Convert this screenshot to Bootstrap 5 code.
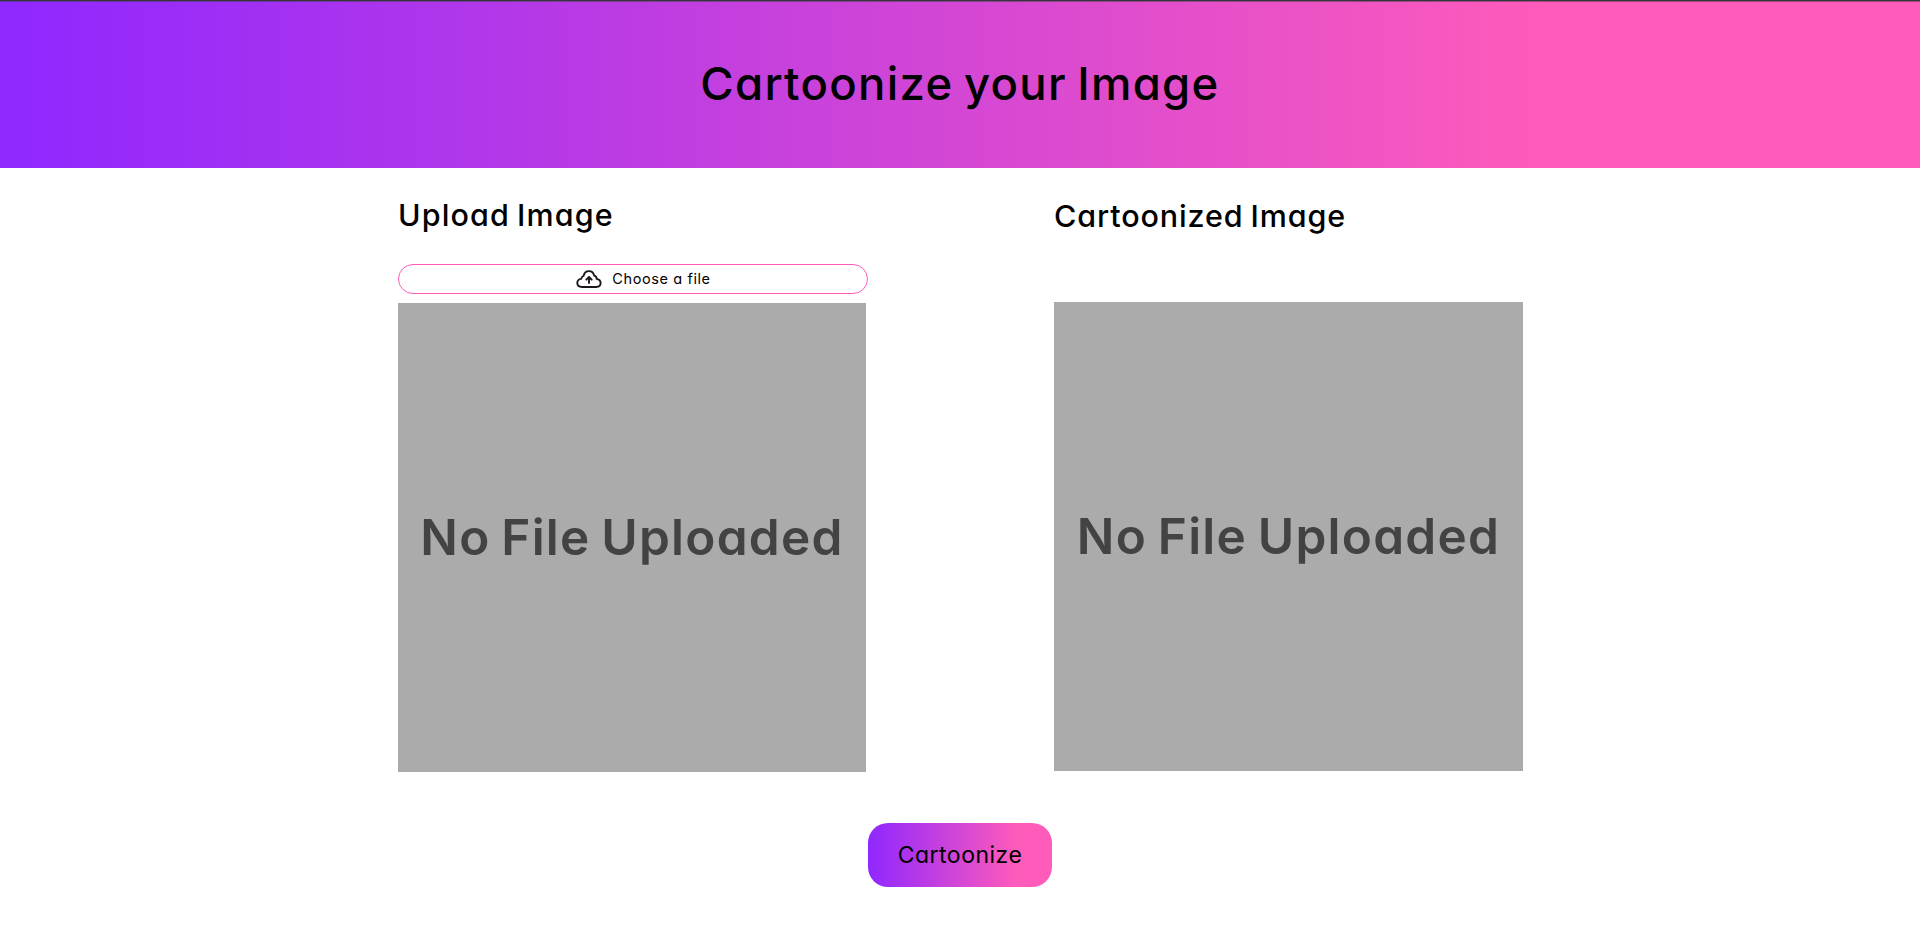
<!DOCTYPE html>
<html lang="en">
<head>
<meta charset="utf-8">
<meta name="viewport" content="width=device-width, initial-scale=1">
<title>Cartoonize your Image</title>
<link href="https://cdn.jsdelivr.net/npm/bootstrap@5.3.0/dist/css/bootstrap.min.css" rel="stylesheet">
<style>
body,button{font-family:Inter,"Open Sans",sans-serif;font-feature-settings:"cv11","ss03"}
body{color:#000;height:933px;overflow:hidden}
.brand-fill{background:linear-gradient(90deg,#8f27ff 0%,#ff5bba 81%)}
.hero{height:168px;border-top:1px solid #35353b;box-shadow:inset 0 1px rgba(60,60,66,.5);padding-top:56px}
.hero h1{font-size:45.5px;line-height:54px;font-weight:500;letter-spacing:1.3px;word-spacing:-3px;margin:0}
.panels{padding-left:398px;gap:186px}
.panel{width:470px}
.panel h2{font-size:30.5px;line-height:36px;font-weight:500;margin:0;white-space:nowrap;word-spacing:-2px}
.source h2{padding-top:29px;letter-spacing:1.1px}
.result h2{padding-top:30px;letter-spacing:.88px}
.picker{height:30px;margin-top:31px;border:1px solid #ff5bba;font-size:14.5px;letter-spacing:.6px;line-height:20px;cursor:pointer;gap:10px;padding:0 0 1px 21px}
.preview{height:469px;background:#ababab;color:#434343;font-size:49.5px;font-weight:600;letter-spacing:1.25px;word-spacing:-3px;line-height:58px;white-space:nowrap;padding-bottom:1px}
.source .preview{width:468px;margin-top:9px}
.result .preview{width:469px;margin-top:68px}
.action{width:184px;height:64px;border-radius:20px;font-size:23px;letter-spacing:.5px;color:#000}
</style>
</head>
<body>
<header class="hero brand-fill d-flex justify-content-center"><h1>Cartoonize your Image</h1></header>
<main>
<div class="panels d-flex">
<section class="panel source">
<h2>Upload Image</h2>
<label class="picker rounded-pill d-flex align-items-center justify-content-center">
<svg width="26" height="20" viewBox="0 0 26 20" fill="none" stroke="#17191c" stroke-width="1.9" stroke-linecap="round" stroke-linejoin="round"><path d="M6 18C-.2 18-.1 10.1 5.2 9.9C5.6 7.8 6.5 7.2 7.6 6.8C9.1.4 16.9.7 18.2 6.6C20 7.1 20.7 8.5 20.7 9.9C26.2 10.9 25.8 18 20.3 18Z"/><path d="M13 14V8.3M10.3 10.7L13 8L15.7 10.7"/></svg>
<span>Choose a file</span><input type="file" class="d-none">
</label>
<div class="preview d-flex align-items-center justify-content-center">No File Uploaded</div>
</section>
<section class="panel result">
<h2>Cartoonized Image</h2>
<div class="preview d-flex align-items-center justify-content-center">No File Uploaded</div>
</section>
</div>
<div class="d-flex justify-content-center" style="padding-top:51px"><button class="action brand-fill border-0 p-0" type="button">Cartoonize</button></div>
</main>
<script src="https://cdn.jsdelivr.net/npm/bootstrap@5.3.0/dist/js/bootstrap.bundle.min.js"></script>
</body>
</html>
